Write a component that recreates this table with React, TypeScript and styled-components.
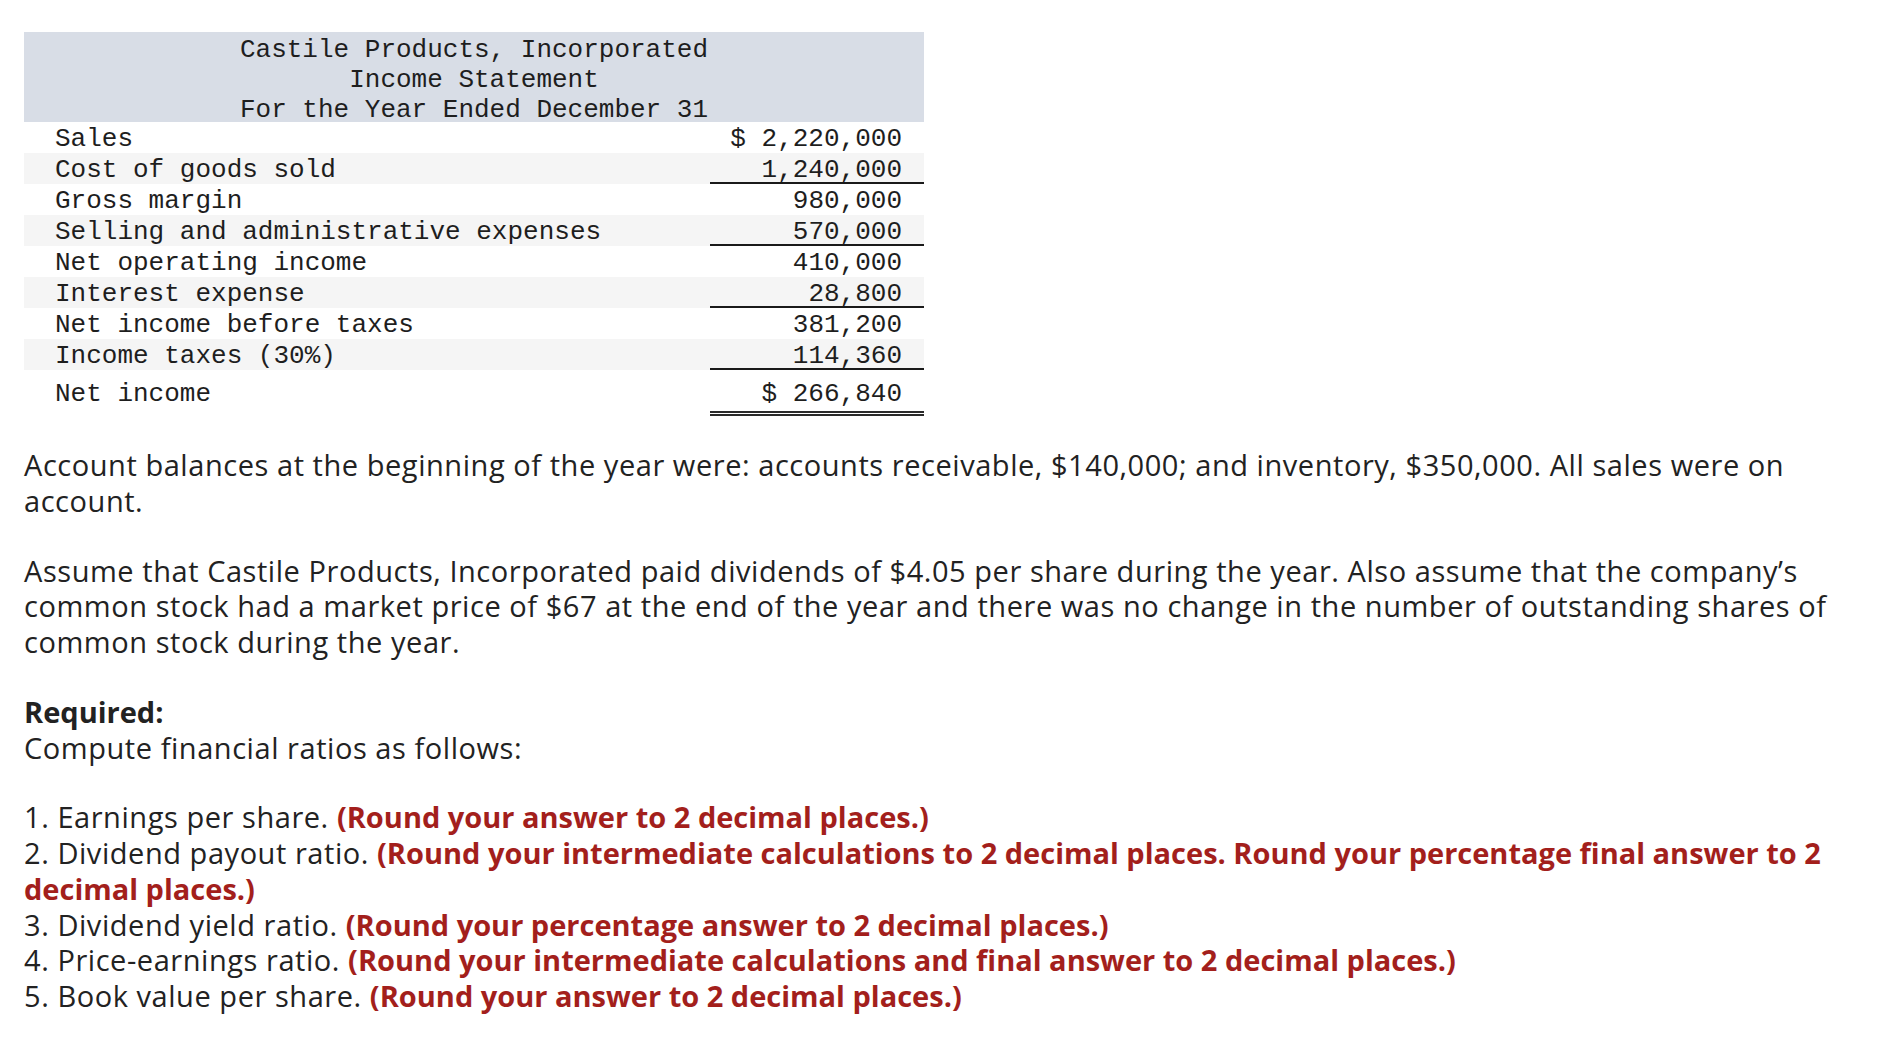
import React from "react";
import styled, { createGlobalStyle } from "styled-components";

const GlobalStyle = createGlobalStyle`
  html, body { margin: 0; padding: 0; background: #ffffff; }
  body { font-family: "Open Sans", "Lato", sans-serif; color: #222222; }
`;

const Page = styled.div`
  box-sizing: border-box;
  width: 1890px;
  padding: 32px 24px 40px 24px;
`;

const Statement = styled.div`
  width: 900px;
  font-family: "Liberation Mono", "DejaVu Sans Mono", monospace;
  font-size: 26px;
  color: #1e1e1e;
`;

const Header = styled.div`
  background: #d8dde6;
  display: flex;
  flex-direction: column;
  align-items: center;
`;

const HeaderLine = styled.div`
  box-sizing: border-box;
  height: 30px;
  padding-top: 6px;
  line-height: 24px;
  white-space: pre;
`;

const Row = styled.div<{ $shaded?: boolean; $total?: boolean }>`
  display: grid;
  grid-template-columns: 1fr 214px;
  align-items: start;
  background: ${(p) => (p.$shaded ? "#f5f5f5" : "#ffffff")};
  padding-top: ${(p) => (p.$total ? "7px" : "0")};
`;

const Label = styled.div`
  box-sizing: border-box;
  height: 31px;
  padding: 3px 0 0 31px;
  line-height: 28px;
  white-space: pre;
`;

const Amount = styled.div<{ $rule: "none" | "single" | "double" }>`
  box-sizing: border-box;
  height: ${(p) => (p.$rule === "double" ? "39px" : "31px")};
  padding: 3px 22px ${(p) => (p.$rule === "double" ? "3px" : "0")} 0;
  line-height: 28px;
  text-align: right;
  white-space: pre;
  border-bottom: ${(p) =>
    p.$rule === "single"
      ? "2px solid #1a1a1a"
      : p.$rule === "double"
      ? "5px double #2a2a2a"
      : "none"};
`;

const Body = styled.div`
  margin-top: 31px;
  width: 1842px;
  font-size: 29px;
  line-height: 35.75px;
  letter-spacing: 0.55px;
  color: #222222;
`;

const Para = styled.p`
  margin: 0 0 34px 0;
`;

const Lead = styled.div`
  font-weight: 700;
  letter-spacing: 0;
`;

const List = styled.div`
  display: flex;
  flex-direction: column;
`;

const Item = styled.div`
  line-height: 35.75px;
`;

const Note = styled.span`
  color: #a31f1c;
  font-weight: 700;
  letter-spacing: 0;
`;

type Line = { label: string; amount: string; rule: "none" | "single" | "double" };

const lines: Line[] = [
  { label: "Sales", amount: "$ 2,220,000", rule: "none" },
  { label: "Cost of goods sold", amount: "1,240,000", rule: "single" },
  { label: "Gross margin", amount: "980,000", rule: "none" },
  { label: "Selling and administrative expenses", amount: "570,000", rule: "single" },
  { label: "Net operating income", amount: "410,000", rule: "none" },
  { label: "Interest expense", amount: "28,800", rule: "single" },
  { label: "Net income before taxes", amount: "381,200", rule: "none" },
  { label: "Income taxes (30%)", amount: "114,360", rule: "single" },
  { label: "Net income", amount: "$ 266,840", rule: "double" },
];

const items: { text: string; note: string }[] = [
  { text: "1. Earnings per share.", note: "(Round your answer to 2 decimal places.)" },
  {
    text: "2. Dividend payout ratio.",
    note: "(Round your intermediate calculations to 2 decimal places. Round your percentage final answer to 2 decimal places.)",
  },
  { text: "3. Dividend yield ratio.", note: "(Round your percentage answer to 2 decimal places.)" },
  {
    text: "4. Price-earnings ratio.",
    note: "(Round your intermediate calculations and final answer to 2 decimal places.)",
  },
  { text: "5. Book value per share.", note: "(Round your answer to 2 decimal places.)" },
];

export default function App() {
  return (
    <Page>
      <GlobalStyle />
      <Statement>
        <Header>
          <HeaderLine>Castile Products, Incorporated</HeaderLine>
          <HeaderLine>Income Statement</HeaderLine>
          <HeaderLine>For the Year Ended December 31</HeaderLine>
        </Header>
        {lines.map((l, i) => (
          <Row key={l.label} $shaded={i % 2 === 1} $total={l.rule === "double"}>
            <Label>{l.label}</Label>
            <Amount $rule={l.rule}>{l.amount}</Amount>
          </Row>
        ))}
      </Statement>
      <Body>
        <Para>
          Account balances at the beginning of the year were: accounts receivable, $140,000; and
          inventory, $350,000. All sales were on account.
        </Para>
        <Para>
          Assume that Castile Products, Incorporated paid dividends of $4.05 per share during the
          year. Also assume that the company’s common stock had a market price of $67 at the end of
          the year and there was no change in the number of outstanding shares of common stock
          during the year.
        </Para>
        <Para>
          <Lead>Required:</Lead>
          <div>Compute financial ratios as follows:</div>
        </Para>
        <List>
          {items.map((it) => (
            <Item key={it.text}>
              {it.text} <Note>{it.note}</Note>
            </Item>
          ))}
        </List>
      </Body>
    </Page>
  );
}
